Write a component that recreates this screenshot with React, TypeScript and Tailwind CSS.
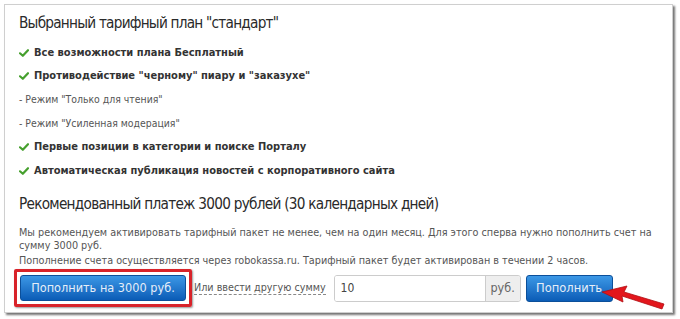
import React from "react";

const font = { fontFamily: '"DejaVu Sans Condensed", "DejaVu Sans", sans-serif' };

function Check() {
  return (
    <svg width="10" height="8" viewBox="0 0 10 8" className="mr-[5px] shrink-0">
      <path d="M1 4.3 L3.8 6.8 L9 1.2" stroke="#46a02e" strokeWidth="2.2" fill="none" strokeLinecap="round" strokeLinejoin="round" />
    </svg>
  );
}

function Item({ check, children }: { check?: boolean; children: React.ReactNode }) {
  return (
    <div className="h-[23.6px] flex items-center">
      {check ? (
        <>
          <Check />
          <span className="font-bold text-[11px] text-[#333]">{children}</span>
        </>
      ) : (
        <span className="text-[10.4px] text-[#555]">- {children}</span>
      )}
    </div>
  );
}

export default function App() {
  return (
    <div className="w-[680px] h-[319px] bg-white pl-[4px] pt-[4px] relative overflow-hidden" style={font}>
      <div className="w-[669px] h-[309px] bg-white border border-[#cfcfcf] shadow-[2px_2px_2px_rgba(0,0,0,0.55)] pl-[14px] pt-[8px]">
        <div className="text-[15.2px] tracking-[-0.76px] leading-[20px] text-[#2a2a2a]">Выбранный тарифный план "стандарт"</div>
        <div className="mt-[8px]">
          <Item check>Все возможности плана Бесплатный</Item>
          <Item check>Противодействие "черному" пиару и "заказухе"</Item>
          <Item>Режим "Только для чтения"</Item>
          <Item>Режим "Усиленная модерация"</Item>
          <Item check>Первые позиции в категории и поиске Порталу</Item>
          <Item check>Автоматическая публикация новостей с корпоративного сайта</Item>
        </div>
        <div className="mt-[11px] text-[15.2px] tracking-[-0.73px] leading-[20px] text-[#2a2a2a]">
          Рекомендованный платеж 3000 рублей (30 календарных дней)
        </div>
        <div className="mt-[12px] text-[10.75px] leading-[13.5px] text-[#555]">
          <div>Мы рекомендуем активировать тарифный пакет не менее, чем на один месяц. Для этого сперва нужно пополнить счет на</div>
          <div>сумму 3000 руб.</div>
          <div className="mt-[1px]">Пополнение счета осуществляется через robokassa.ru. Тарифный пакет будет активирован в течении 2 часов.</div>
        </div>
        <div className="mt-[2px] flex items-center">
          <div className="-ml-[5px] border-[3px] border-[#d8232a] rounded-[2px] p-[3px] shadow-[1px_1px_2px_rgba(0,0,0,0.4)]">
            <div className="h-[26px] w-[166px] rounded-[3px] border border-[#0b4f9a] bg-gradient-to-b from-[#3c98e6] to-[#0a5cb6] flex items-center justify-center text-[12.6px] text-[#e6eef8]">
              Пополнить на 3000 руб.
            </div>
          </div>
          <span className="ml-[2px] text-[10.7px] text-[#555] border-b border-dashed border-[#888] leading-[13px]">Или ввести другую сумму</span>
          <div className="ml-[8px] flex h-[27px] w-[187px] border border-[#ccc] rounded-[3px] overflow-hidden">
            <div className="flex-1 flex items-center pl-[6px] text-[12px] text-[#444] bg-white">10</div>
            <div className="w-[35px] flex items-center justify-center text-[12.5px] text-[#666] bg-[#eee] border-l border-[#ccc]">руб.</div>
          </div>
          <div className="ml-[5px] h-[27px] w-[87px] rounded-[3px] border border-[#0b4f9a] bg-gradient-to-b from-[#3c98e6] to-[#0a5cb6] flex items-center justify-center text-[12.8px] text-[#e6eef8]">
            Пополнить
          </div>
        </div>
      </div>
      <svg className="absolute left-0 top-0" width="680" height="319" viewBox="0 0 680 319">
        <path d="M662 309 L622 296 L623 302 L602 292 L627 286 L624 292 L664 304 Z" fill="#e3161c" stroke="#b00d12" strokeWidth="0.8" />
      </svg>
    </div>
  );
}
